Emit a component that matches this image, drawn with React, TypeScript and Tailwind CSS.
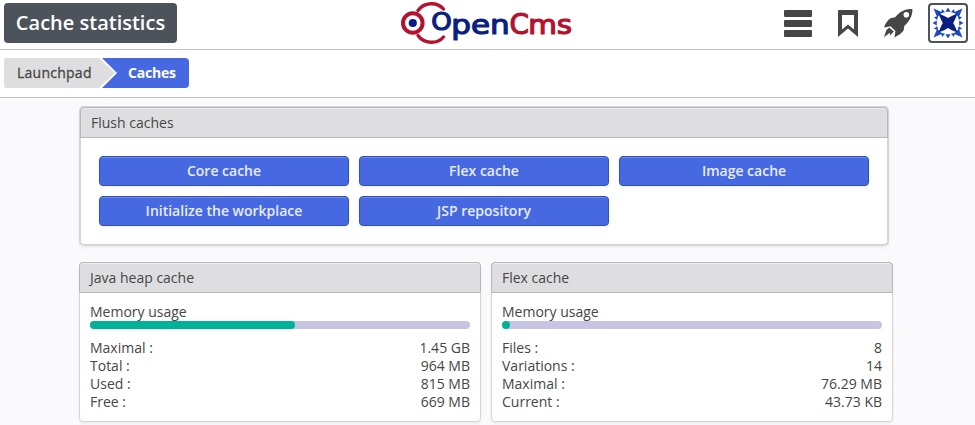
import type { ReactNode } from "react";

function Logo() {
  return (
    <svg width="180" height="48" viewBox="398 0 180 48" className="block" aria-label="OpenCms">
      <g fill="none" stroke="#b5122f">
        <circle cx="412.8" cy="23" r="9.8" strokeWidth="4" />
        <path d="M418 10.5C424 2 437 1.5 443.5 9M418 35.5C424 44 437 44.5 443.5 37" strokeWidth="3.4" strokeLinecap="round" />
      </g>
      <circle cx="412.8" cy="23" r="4.1" fill="#0a1e82" />
      <g fontFamily="'DejaVu Sans', sans-serif" strokeWidth="1.2" strokeLinejoin="round">
        <g fill="#0a1e82" stroke="#0a1e82">
          <text x="431.3" y="30.3" fontSize="24" textLength="20.5" lengthAdjust="spacingAndGlyphs">O</text>
          <text x="451.3" y="33.5" fontSize="27" textLength="58.5" lengthAdjust="spacingAndGlyphs">pen</text>
        </g>
        <g fill="#b5122f" stroke="#b5122f">
          <text x="509.5" y="33.5" fontSize="28" textLength="19.5" lengthAdjust="spacingAndGlyphs">C</text>
          <text x="528.2" y="33.5" fontSize="27" textLength="44" lengthAdjust="spacingAndGlyphs">ms</text>
        </g>
      </g>
    </svg>
  );
}

function Rocket() {
  return (
    <svg width="32" height="32" viewBox="881 7 32 32" className="block">
      <path
        fill="#464646"
        fillRule="evenodd"
        d="M912.4 9C906 8.7 900 11 895.2 17.2L890.5 18.3C887.5 20.5 885.2 23.5 884 27.5L890.5 26.3L895.4 31L894.5 37.4C898.5 35.5 901.8 33 903.6 30.5L904.4 25.8C910 21 912.6 15 912.4 9ZM906.3 12a2.8 2.8 0 1 1 0 5.6a2.8 2.8 0 1 1 0-5.6Z"
      />
      <path fill="#464646" d="M889.2 27.4L893.8 31.6L890 35.6L889.8 32.8L884 37.2L886.3 30.2Z" />
    </svg>
  );
}

function Avatar() {
  return (
    <svg width="34" height="34" viewBox="-17 -17 34 34" className="block">
      {[0, 90, 180, 270].map((angle) => (
        <g key={angle} transform={`rotate(${angle})`} fill="#1d49c4">
          <path d="M-14.5-14.5L-5.8-10.8L-10.8-5.8Z" />
          <path d="M-7.2-9.8L-5.8-14L-3-10.8ZM-2.6-11.2L0-15.5L2.6-11.2ZM3-10.8L5.8-14L7.2-9.8Z" />
        </g>
      ))}
      <path fill="#0a1e82" d="M-9.5-9.5Q-3-7 0-5Q3-7 9.5-9.5Q7-3 5.2 0Q7 3 9.5 9.5Q3 7 0 5Q-3 7-9.5 9.5Q-7 3-5.2 0Q-7-3-9.5-9.5Z" />
    </svg>
  );
}

function Panel({ title, children, className, raised }: { title: string; children: ReactNode; className: string; raised?: boolean }) {
  return (
    <section
      className={`box-border rounded-[4px] border bg-white ${raised ? "border-[#d5d5d6] shadow-[0_0_0_1px_#d5d5d6,0_2px_3px_1px_rgba(0,0,0,0.05)]" : "border-[#d5d5d6] shadow-[0_2px_3px_rgba(0,0,0,0.05)]"} ${className}`}
    >
      <h2 className="-mx-px -mt-px flex h-[31px] items-center rounded-t-[4px] border border-[#b8b8ba] bg-[#dedee0] px-2.5 text-sm shadow-[inset_0_1px_0_#efeff0]">
        {title}
      </h2>
      {children}
    </section>
  );
}

function CacheButton({ children }: { children: ReactNode }) {
  return (
    <button className="h-[30px] rounded-[4px] border border-[#3152b4] bg-[#4669e1] text-sm leading-[28px] font-semibold text-[#e8ecfb] shadow-[inset_0_1px_0_#6e89e8,0_2px_3px_rgba(0,0,0,0.05)]">
      {children}
    </button>
  );
}

function Statistics({ title, percent, rows }: { title: string; percent: number; rows: string[][] }) {
  return (
    <Panel title={title} className="h-[160px] w-[402px]">
      <div className="px-2.5 pt-2.5 text-sm leading-[18px]">
        <div>Memory usage</div>
        <div className="h-2 rounded-full bg-[#c8c5e4]">
          <div className="h-2 min-w-2 rounded-full bg-[#00b398]" style={{ width: `${percent}%` }} />
        </div>
        <dl className="mt-2.5">
          {rows.map(([label, value]) => (
            <div key={label} className="flex h-[18px] justify-between">
              <dt>{label} :</dt>
              <dd>{value}</dd>
            </div>
          ))}
        </dl>
      </div>
    </Panel>
  );
}

export default function App() {
  return (
    <div className="h-[425px] w-[975px] overflow-hidden bg-[#fafafc] font-['Open_Sans',sans-serif] text-[#464646]">
      <header className="flex h-[50px] border-b border-[#c4c4c5] bg-white">
        <div className="w-[398px] pt-[3px] pl-1">
          <h1 className="flex h-10 w-[173px] items-center justify-center rounded-[4px] bg-[#4c535b] text-[20px] font-semibold whitespace-nowrap text-white">
            Cache statistics
          </h1>
        </div>
        <Logo />
        <div className="flex flex-1 items-start">
          <div className="mt-[10px] ml-[206px] flex w-7 flex-col gap-[3px]">
            <span className="h-[7px] rounded-[1px] bg-[#464646]" />
            <span className="h-[7px] rounded-[1px] bg-[#464646]" />
            <span className="h-[7px] rounded-[1px] bg-[#464646]" />
          </div>
          <svg width="20" height="27" viewBox="0 0 20 27" className="mt-[10px] ml-[26px]">
            <path fill="#464646" fillRule="evenodd" d="M1 0H19Q20 0 20 1V27L10 18.5L0 27V1Q0 0 1 0ZM4 5V19.5L10 14.5L16 19.5V5Z" />
          </svg>
          <div className="mt-[7px] ml-[23px]"><Rocket /></div>
          <div className="mt-[3px] ml-[15px] flex h-10 w-10 items-center justify-center rounded-[4px] border-2 border-[#4c535b]">
            <Avatar />
          </div>
        </div>
      </header>
      <nav className="flex h-12 border-b border-[#c4c4c5] bg-white pt-2 pl-1 text-sm">
        <div className="flex h-[30px] w-[185px] overflow-hidden rounded-[4px] bg-[#4669e1]">
          <div className="w-[113px] bg-white [clip-path:polygon(0_0,98px_0,113px_50%,98px_100%,0_100%)]">
            <div className="h-full bg-[#dedee0] pl-[13px] leading-[30px] tracking-[0.25px] [-webkit-text-stroke:0.3px_#464646] [clip-path:polygon(0_0,95px_0,111px_50%,95px_100%,0_100%)]">Launchpad</div>
          </div>
          <div className="pl-[11px] leading-[30px] font-bold tracking-[-0.2px] text-white">Caches</div>
        </div>
      </nav>
      <main>
        <Panel title="Flush caches" raised className="mt-[9px] ml-[80px] h-[138px] w-[808px]">
          <div className="grid grid-cols-3 gap-2.5 px-[18px] pt-[18px]">
            <CacheButton>Core cache</CacheButton>
            <CacheButton>Flex cache</CacheButton>
            <CacheButton>Image cache</CacheButton>
            <CacheButton>Initialize the workplace</CacheButton>
            <CacheButton>JSP repository</CacheButton>
          </div>
        </Panel>
        <div className="mt-[17px] ml-[79px] flex gap-2.5">
          <Statistics
            title="Java heap cache"
            percent={54}
            rows={[["Maximal", "1.45 GB"], ["Total", "964 MB"], ["Used", "815 MB"], ["Free", "669 MB"]]}
          />
          <Statistics
            title="Flex cache"
            percent={0}
            rows={[["Files", "8"], ["Variations", "14"], ["Maximal", "76.29 MB"], ["Current", "43.73 KB"]]}
          />
        </div>
      </main>
    </div>
  );
}
